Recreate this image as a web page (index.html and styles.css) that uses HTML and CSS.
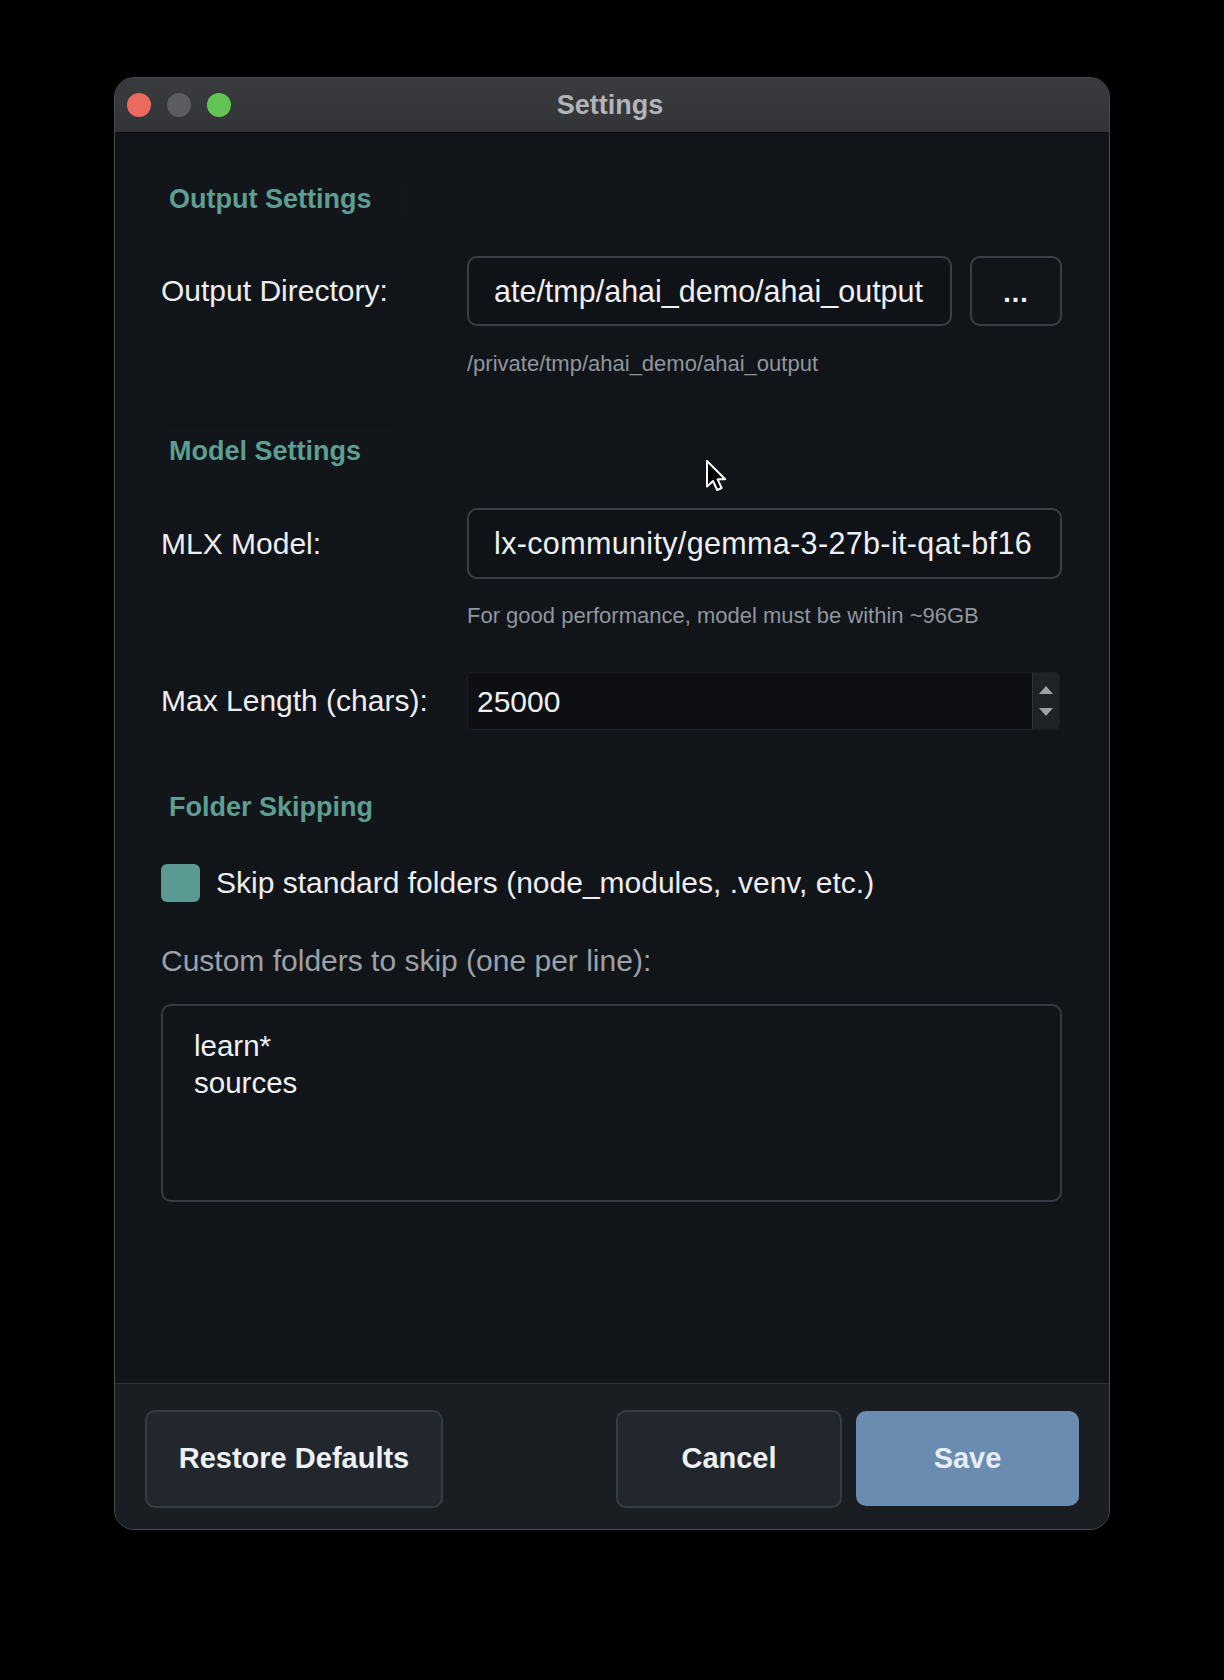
FILE: index.html
```html
<!DOCTYPE html>
<html lang="en">
<head>
    <meta charset="UTF-8">
    <title>Settings</title>
    <link rel="stylesheet" href="styles.css">
</head>
<body>
    <div class="stage">
        <div class="window">
            <div class="titlebar">
                <div class="lights">
                    <span class="light close"></span>
                    <span class="light min"></span>
                    <span class="light max"></span>
                </div>
                <div class="title">Settings</div>
                <div></div>
            </div>

            <div class="content">
                <div class="section-title">Output Settings</div>
                <div class="row row-dir">
                    <label class="label">Output Directory:</label>
                    <div class="dir-field">
                        <div class="field">ate/tmp/ahai_demo/ahai_output</div>
                        <button class="browse">...</button>
                    </div>
                </div>
                <div class="hint">/private/tmp/ahai_demo/ahai_output</div>

                <div class="section-title section-gap">Model Settings</div>
                <div class="row row-model">
                    <label class="label">MLX Model:</label>
                    <div class="field">lx-community/gemma-3-27b-it-qat-bf16</div>
                </div>
                <div class="hint hint-model">For good performance, model must be within ~96GB</div>

                <div class="row row-len">
                    <label class="label">Max Length (chars):</label>
                    <div class="spinbox">
                        <span class="spin-value">25000</span>
                        <span class="spin-arrows">
                            <span class="arrow-up"></span>
                            <span class="arrow-down"></span>
                        </span>
                    </div>
                </div>

                <div class="section-title section-gap-lg">Folder Skipping</div>
                <div class="check-row">
                    <span class="checkbox"></span>
                    <span class="check-label">Skip standard folders (node_modules, .venv, etc.)</span>
                </div>
                <div class="custom-label">Custom folders to skip (one per line):</div>
                <div class="textarea">learn*<br>sources</div>
            </div>

            <div class="footer">
                <button class="btn btn-restore">Restore Defaults</button>
                <div class="spacer"></div>
                <button class="btn btn-cancel">Cancel</button>
                <button class="btn btn-save">Save</button>
            </div>
        </div>
    </div>

    <!-- pointeur de la souris -->
    <svg class="cursor" width="24" height="36" viewBox="0 0 24 36">
        <path d="M3 2 L3 27.5 L9 22 L13.2 31 L17.6 29 L13.6 20.3 L21.2 20.3 Z" fill="#000" stroke="#fff" stroke-width="2" stroke-linejoin="round"/>
    </svg>
</body>
</html>
```

FILE: styles.css
```css
* {
    margin: 0;
    padding: 0;
    box-sizing: border-box;
}

body {
    background-color: #000;
    font-family: "Liberation Sans", Arial, sans-serif;
    color: #e6e8eb;
    width: 1224px;
    height: 1680px;
    position: relative;
}

.stage {
    padding: 77px 0 0 114px;
}

.window {
    width: 996px;
    height: 1453px;
    border: 1px solid #4a4c50;
    border-radius: 20px;
    background-color: #111418;
    display: flex;
    flex-direction: column;
    overflow: hidden;
}

.titlebar {
    height: 55px;
    background: linear-gradient(#3a3b3f, #333438);
    border-bottom: 1px solid #0b0c0d;
    display: grid;
    grid-template-columns: 1fr auto 1fr;
    align-items: center;
}

.lights {
    display: flex;
    gap: 16px;
    padding-left: 12px;
}

.light {
    width: 24px;
    height: 24px;
    border-radius: 50%;
}

.close { background-color: #ec6a5e; }
.min { background-color: #5b5c60; }
.max { background-color: #61c454; }

.title {
    font-size: 27px;
    font-weight: bold;
    color: #b3b4b8;
    margin-left: -4px;
}

.content {
    flex: 1;
    padding: 43px 47px 0 46px;
}

.section-title {
    width: fit-content;
    height: 46px;
    line-height: 46px;
    padding: 0 34px 0 8px;
    font-size: 27px;
    font-weight: bold;
    color: #5e9e92;
    background-color: #121519;
    border-radius: 4px;
}

.section-gap {
    margin-top: 51px;
}

.section-gap-lg {
    margin-top: 54px;
}

.row {
    display: grid;
    grid-template-columns: 306px 1fr;
    align-items: center;
    margin-top: 34px;
}

.label {
    font-size: 30px;
    color: #eceef1;
}

.dir-field {
    display: flex;
    gap: 18px;
}

.field {
    flex: 1;
    height: 70px;
    line-height: 66px;
    padding: 0 20px 0 25px;
    font-size: 30.5px;
    color: #eef0f3;
    white-space: nowrap;
    overflow: hidden;
    background-color: #0f1216;
    border: 2px solid #3a3f47;
    border-radius: 10px;
}

.row-model .field {
    height: 71px;
    letter-spacing: 0.35px;
}

.browse {
    width: 92px;
    height: 70px;
    background-color: #111418;
    border: 2px solid #3a3f47;
    border-radius: 10px;
    color: #eef0f3;
    font-family: inherit;
    font-size: 27px;
    font-weight: bold;
    letter-spacing: 1px;
    padding-top: 4px;
}

.hint {
    margin: 25px 0 0 306px;
    font-size: 22px;
    line-height: 26px;
    color: #8f969f;
}

.hint-model {
    margin-top: 24px;
}

.row-len {
    margin-top: 43px;
}

.spinbox {
    height: 58px;
    margin-right: 2px;
    display: flex;
    background-color: #0d0f12;
    border: 1px solid #1c1f24;
    border-radius: 4px;
}

.spin-value {
    flex: 1;
    font-size: 30px;
    line-height: 58px;
    padding-left: 9px;
    color: #eef0f3;
}

.spin-arrows {
    width: 27px;
    background-color: #1f2227;
    border-left: 1px solid #30343a;
    border-radius: 0 4px 4px 0;
    display: flex;
    flex-direction: column;
    align-items: center;
    justify-content: center;
    gap: 14px;
}

.arrow-up,
.arrow-down {
    width: 0;
    height: 0;
    border-left: 7px solid transparent;
    border-right: 7px solid transparent;
}

.arrow-up {
    border-bottom: 8px solid #9da1a7;
}

.arrow-down {
    border-top: 8px solid #9da1a7;
}

.check-row {
    margin-top: 34px;
    display: flex;
    align-items: center;
    gap: 16px;
    height: 38px;
}

.checkbox {
    width: 39px;
    height: 38px;
    background-color: #5a9a92;
    border-radius: 6px;
}

.check-label {
    font-size: 30px;
    color: #eceef1;
}

.custom-label {
    margin-top: 41px;
    font-size: 30px;
    line-height: 36px;
    color: #9aa1a9;
}

.textarea {
    margin-top: 25px;
    height: 198px;
    padding: 21px 31px;
    font-size: 29.5px;
    line-height: 37px;
    color: #eef0f3;
    background-color: #111418;
    border: 2px solid #363b43;
    border-radius: 10px;
}

.footer {
    height: 146px;
    border-top: 1px solid #2d3239;
    background-color: #1a1d22;
    display: flex;
    align-items: center;
    gap: 14px;
    padding: 0 30px 0 30px;
}

.spacer {
    flex: 1;
}

.btn {
    height: 98px;
    font-family: inherit;
    font-size: 29px;
    font-weight: bold;
    color: #eef1f5;
    background-color: #22262d;
    border: 2px solid #373c44;
    border-radius: 10px;
    margin-top: 4px;
}

.btn-restore {
    width: 298px;
}

.btn-cancel {
    width: 226px;
}

.btn-save {
    width: 223px;
    height: 95px;
    background-color: #6a8cb0;
    border: none;
    color: #e6edf6;
}

.cursor {
    position: absolute;
    left: 704px;
    top: 459px;
}
```
